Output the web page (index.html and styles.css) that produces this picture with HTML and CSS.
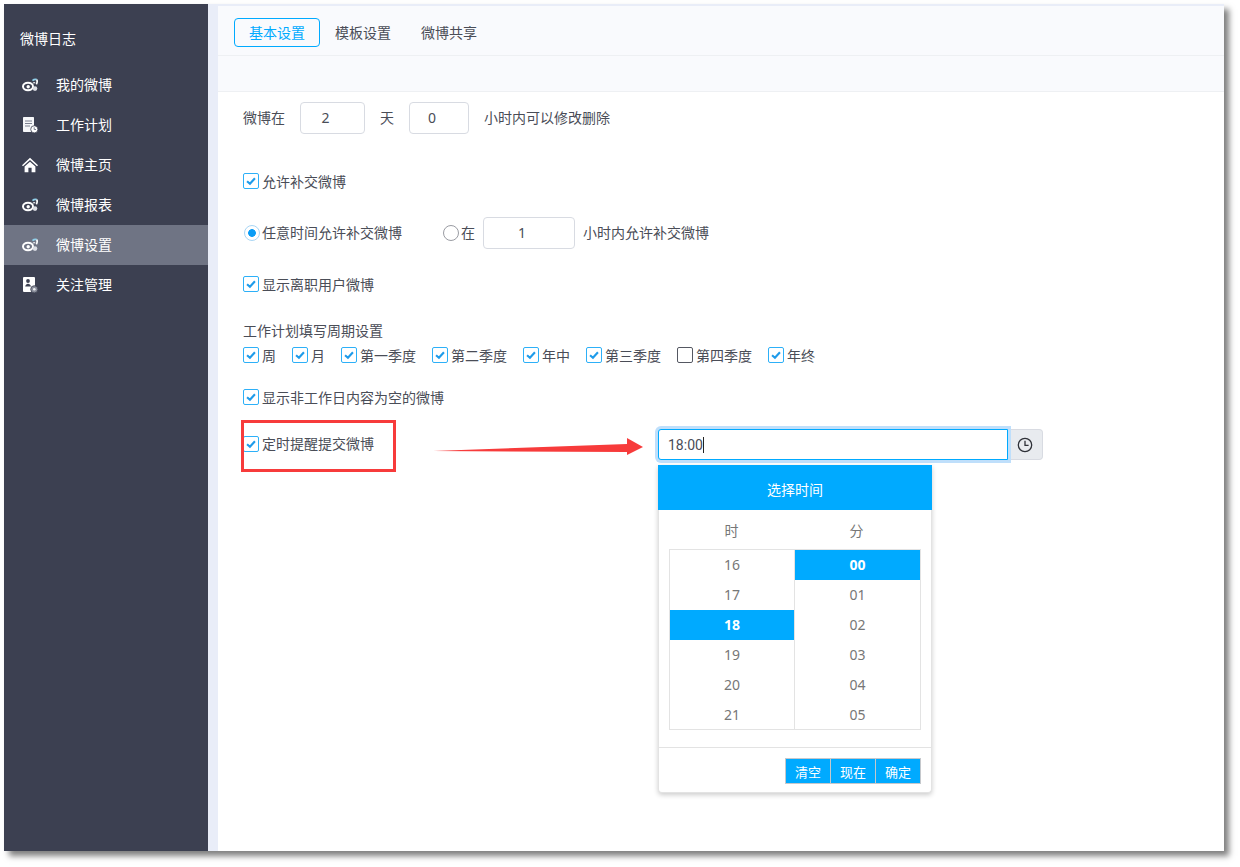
FILE: index.html
```html
<!DOCTYPE html>
<html lang="zh-CN">
<head>
<meta charset="utf-8">
<title>微博设置</title>
<link rel="stylesheet" href="styles.css">
</head>
<body>
<svg class="defs" width="0" height="0" aria-hidden="true">
  <symbol id="i-weibo" viewBox="0 0 16 16">
    <ellipse cx="6" cy="9.500" rx="5" ry="3.700" fill="none" stroke="#fff" stroke-width="2"/>
    <circle cx="6.200" cy="9.700" r="1.700" fill="#fff"/>
    <path d="M10.500 3.600C11.700 2.500 13.200 2.200 14.800 2.600" fill="none" stroke="#8fd0ea" stroke-width="1.700"/>
    <path d="M14.800 2.600C15.400 4.200 15.200 5.800 14.300 7.200" fill="none" stroke="#fff" stroke-width="1.700"/>
    <path d="M11 6C11.800 5.500 12.500 5.500 13.100 5.800" fill="none" stroke="#e6e8ee" stroke-width="1.300"/>
    <circle cx="13" cy="11.600" r="2.300" fill="#dcdee5"/>
  </symbol>
  <symbol id="i-plan" viewBox="0 0 16 16">
    <path d="M1 1C1 .4 1.500 0 2 0h9c.6 0 1 .4 1 1v14H2c-.5 0-1-.4-1-1z" fill="#f6f7f9"/>
    <path d="M3 4h7M3 6.500h7M3 9h5" stroke="#7c8190" stroke-width="1"/>
    <circle cx="12.300" cy="12.300" r="3.600" fill="#fff" stroke="#3c4051" stroke-width=".8"/>
    <path d="M12.200 10.300v2.200h1.800" fill="none" stroke="#7c8190"/>
  </symbol>
  <symbol id="i-home" viewBox="0 0 16 16">
    <path d="M8 .8 0 8.200l1 1L8 3l7 6.200 1-1z" fill="#fff"/>
    <path d="M2.600 9.600 8 4.800l5.400 4.800v5.600H9.600v-4.400H6.400v4.400H2.600z" fill="#fff"/>
  </symbol>
  <symbol id="i-follow" viewBox="0 0 16 16">
    <rect x="1" y="0" width="12" height="15" rx="1" fill="#fff"/>
    <circle cx="6" cy="4" r="1.900" fill="#3c4051"/>
    <path d="M3.200 9.500c.4-2 1.500-2.800 2.800-2.800s2.500.8 3 2.800z" fill="#3c4051"/>
    <circle cx="12.300" cy="12.300" r="3.600" fill="#8a8e9b" stroke="#3c4051" stroke-width=".8"/>
    <circle cx="12.300" cy="12.300" r="1.300" fill="#eceef2"/>
  </symbol>
</svg>

<div class="window">
  <aside class="sidebar">
    <div class="side-title">微博日志</div>
    <nav class="side-nav">
      <a class="side-item"><svg class="side-icon"><use href="#i-weibo"/></svg>我的微博</a>
      <a class="side-item"><svg class="side-icon"><use href="#i-plan"/></svg>工作计划</a>
      <a class="side-item"><svg class="side-icon"><use href="#i-home"/></svg>微博主页</a>
      <a class="side-item"><svg class="side-icon"><use href="#i-weibo"/></svg>微博报表</a>
      <a class="side-item active"><svg class="side-icon"><use href="#i-weibo"/></svg>微博设置</a>
      <a class="side-item"><svg class="side-icon"><use href="#i-follow"/></svg>关注管理</a>
    </nav>
  </aside>

  <main class="panel">
    <div class="tabs">
      <a class="tab current">基本设置</a>
      <a class="tab">模板设置</a>
      <a class="tab">微博共享</a>
    </div>
    <div class="subbar"></div>

    <form class="form">
      <div class="row row-limit">
        <span>微博在</span>
        <span class="num n-day">2</span>
        <span>天</span>
        <span class="num n-hour">0</span>
        <span>小时内可以修改删除</span>
      </div>

      <div class="row row-allow">
        <label class="opt"><span class="check"><svg viewBox="0 0 16 16"><path d="M3.500 8.200 6.800 11.200 12.500 4.800"/></svg></span>允许补交微博</label>
      </div>

      <div class="row row-mode">
        <label class="opt"><span class="radio on"></span>任意时间允许补交微博</label>
        <label class="opt opt-in"><span class="radio"></span>在</label>
        <span class="num n-within">1</span>
        <span>小时内允许补交微博</span>
      </div>

      <div class="row row-left">
        <label class="opt"><span class="check"><svg viewBox="0 0 16 16"><path d="M3.500 8.200 6.800 11.200 12.500 4.800"/></svg></span>显示离职用户微博</label>
      </div>

      <div class="row row-cycle-title">工作计划填写周期设置</div>

      <div class="row row-cycle">
        <label class="opt"><span class="check"><svg viewBox="0 0 16 16"><path d="M3.500 8.200 6.800 11.200 12.500 4.800"/></svg></span>周</label>
        <label class="opt"><span class="check"><svg viewBox="0 0 16 16"><path d="M3.500 8.200 6.800 11.200 12.500 4.800"/></svg></span>月</label>
        <label class="opt"><span class="check"><svg viewBox="0 0 16 16"><path d="M3.500 8.200 6.800 11.200 12.500 4.800"/></svg></span>第一季度</label>
        <label class="opt"><span class="check"><svg viewBox="0 0 16 16"><path d="M3.500 8.200 6.800 11.200 12.500 4.800"/></svg></span>第二季度</label>
        <label class="opt"><span class="check"><svg viewBox="0 0 16 16"><path d="M3.500 8.200 6.800 11.200 12.500 4.800"/></svg></span>年中</label>
        <label class="opt"><span class="check"><svg viewBox="0 0 16 16"><path d="M3.500 8.200 6.800 11.200 12.500 4.800"/></svg></span>第三季度</label>
        <label class="opt"><span class="check off"></span>第四季度</label>
        <label class="opt"><span class="check"><svg viewBox="0 0 16 16"><path d="M3.500 8.200 6.800 11.200 12.500 4.800"/></svg></span>年终</label>
      </div>

      <div class="row row-empty">
        <label class="opt"><span class="check"><svg viewBox="0 0 16 16"><path d="M3.500 8.200 6.800 11.200 12.500 4.800"/></svg></span>显示非工作日内容为空的微博</label>
      </div>

      <div class="row row-remind">
        <label class="opt opt-remind"><span class="check"><svg viewBox="0 0 16 16"><path d="M3.500 8.200 6.800 11.200 12.500 4.800"/></svg></span>定时提醒提交微博</label>
        <div class="time-field">
          <div class="time-input">18:00<span class="caret"></span></div>
          <div class="time-addon">
            <svg viewBox="0 0 16 16"><circle cx="8" cy="8" r="6.700"/><path d="M8 3.800V8.400H11.600"/></svg>
          </div>

          <div class="picker">
            <div class="picker-head">选择时间</div>
            <div class="picker-labels"><span>时</span><span>分</span></div>
            <div class="picker-cols">
              <ul class="col">
                <li>16</li><li>17</li><li class="sel">18</li><li>19</li><li>20</li><li>21</li>
              </ul>
              <ul class="col">
                <li class="sel">00</li><li>01</li><li>02</li><li>03</li><li>04</li><li>05</li>
              </ul>
            </div>
            <div class="picker-foot">
              <span class="pbtn">清空</span><span class="pbtn">现在</span><span class="pbtn">确定</span>
            </div>
          </div>
        </div>
      </div>

      <div class="mark-box"></div>
      <svg class="mark-arrow" viewBox="0 0 212 20"><polygon points="0,13 194,6 194,0 210,9 194,17 194,14"/></svg>
    </form>
  </main>
</div>
</body>
</html>
```

FILE: styles.css
```css
* { box-sizing: border-box; }
html, body { margin: 0; height: 100%; }
body {
  padding: 4px;
  background: #fff;
  overflow: hidden;
  font-family: "Noto Sans", "Noto Sans CJK SC", sans-serif;
  font-size: 14px;
  color: #4a4d57;
}
.defs { position: absolute; }

.window {
  display: flex;
  width: 1220px;
  height: 847px;
  background: #e9edf8;
  box-shadow: 5px 5px 6px rgba(0, 0, 0, .5);
}

.sidebar {
  flex: 0 0 204px;
  background: #3c4051;
  color: #fff;
}
.side-title {
  height: 61px;
  padding: 24px 0 0 16px;
  line-height: 22px;
}
.side-item {
  display: flex;
  align-items: center;
  height: 40px;
  padding: 0 0 2px 18px;
  color: #fff;
}
.side-item.active { background: #6f7484; }
.side-icon {
  width: 16px;
  height: 16px;
  margin: 2px 18px 0 0;
  flex: none;
}

.panel {
  display: flex;
  flex-direction: column;
  flex: 1;
  margin: 2px 0 0 10px;
  background: #fff;
  min-width: 0;
}
.tabs {
  display: flex;
  height: 50px;
  padding: 12px 0 0 16px;
  background: #f9fafd;
  border-bottom: 1px solid #eef0f3;
}
.tab {
  width: 86px;
  height: 29px;
  line-height: 27px;
  text-align: center;
  border: 1px solid transparent;
  border-radius: 4px;
  color: #4a4d57;
}
.tab.current {
  border-color: #00aaff;
  color: #00aaff;
}
.subbar {
  height: 36px;
  background: #f9fafd;
  border-bottom: 1px solid #eef0f3;
}

.form {
  position: relative;
  flex: 1;
  padding: 10px 0 0 25px;
}
.row {
  display: flex;
  align-items: center;
  height: 20px;
  line-height: 20px;
}
.opt {
  display: flex;
  align-items: center;
}
.check {
  flex: none;
  width: 16px;
  height: 16px;
  margin-right: 3px;
  border: 1px solid #2db0f8;
  border-radius: 2px;
  background: #fff;
  position: relative;
  top: -1px;
}
.check svg {
  display: block;
  width: 14px;
  height: 14px;
  fill: none;
  stroke: #1e9bea;
  stroke-width: 2.400;
}
.check.off { border-color: #555862; }
.radio {
  flex: none;
  width: 16px;
  height: 16px;
  margin-right: 2px;
  border: 1px solid #9a9ca3;
  border-radius: 50%;
  background: #fff;
}
.radio.on {
  margin-left: 1px;
  margin-right: 2px;
  border-color: #a9d6f5;
  background: radial-gradient(circle, #0a9cf5 0 3.500px, #fff 4.200px);
}
.num {
  display: block;
  height: 32px;
  line-height: 30px;
  padding-right: 14px;
  text-align: center;
  border: 1px solid #d8dbe2;
  border-radius: 4px;
  background: #fff;
  font-size: 14px;
}
.row-limit { height: 32px; gap: 15px; }
.row-limit .n-day { width: 65px; }
.row-limit .n-hour { width: 60px; }
.row-allow { margin-top: 38px; }
.row-mode { height: 32px; margin-top: 25px; }
.opt-in { margin-left: 41px; }
.n-within { width: 92px; margin: 0 8px; }
.row-left { margin-top: 26px; }
.row-cycle-title { margin-top: 26px; }
.row-cycle { margin-top: 5px; gap: 16px; }
.row-empty { margin-top: 22px; }
.row-remind {
  height: 31px;
  margin-top: 21px;
}
.opt-remind {
  width: 415px;
  padding-bottom: 2px;
}
.opt-remind .check { top: 0; }

.time-field {
  position: relative;
  display: flex;
  width: 385px;
  height: 31px;
}
.time-input {
  width: 350px;
  height: 31px;
  padding-left: 9px;
  line-height: 31px;
  font-family: Roboto, sans-serif;
  border: 1px solid #00aaff;
  border-radius: 3px 0 0 3px;
  background: #fff;
  box-shadow: 0 0 0 3px #bfdffb;
  position: relative;
  z-index: 1;
}
.caret {
  display: inline-block;
  width: 1px;
  height: 16px;
  background: #222;
  vertical-align: -3px;
}
.time-addon {
  display: flex;
  align-items: center;
  justify-content: center;
  width: 35px;
  background: #e8ebef;
  border: 1px solid #d8dbe2;
  border-left: 0;
  border-radius: 0 4px 4px 0;
}
.time-addon svg {
  width: 16px;
  height: 16px;
  fill: none;
  stroke: #2e3138;
  stroke-width: 1.300;
}

.picker {
  position: absolute;
  left: 0;
  top: 36px;
  z-index: 2;
  width: 274px;
  height: 328px;
  background: #fff;
  border: 1px solid #e3e3e3;
  border-top: 0;
  border-radius: 0 0 4px 4px;
  box-shadow: 0 2px 5px rgba(0, 0, 0, .2);
  color: #777;
}
.picker-head {
  height: 45px;
  margin: 0 -1px;
  line-height: 50px;
  text-align: center;
  background: #00aaff;
  color: #fff;
}
.picker-labels {
  display: flex;
  height: 39px;
  padding: 0 10px;
  line-height: 42px;
}
.picker-labels span {
  flex: 0 0 125px;
  text-align: center;
}
.picker-cols {
  display: flex;
  width: 252px;
  height: 181px;
  margin-left: 10px;
  border: 1px solid #e3e3e3;
}
.col {
  flex: 1;
  margin: 0;
  padding: 0;
  list-style: none;
  text-align: center;
}
.col:first-child {
  flex: 0 0 125px;
  border-right: 1px solid #e3e3e3;
}
.col li {
  height: 30px;
  line-height: 30px;
}
.col li.sel {
  background: #00aaff;
  color: #fff;
  font-weight: 700;
}
.picker-foot {
  display: flex;
  justify-content: flex-end;
  height: 46px;
  margin-top: 17px;
  padding: 10px 10px 0 0;
  border-top: 1px solid #e3e3e3;
}
.pbtn {
  width: 45px;
  height: 26px;
  line-height: 26px;
  font-size: 13px;
  text-align: center;
  color: #fff;
  background: #00aaff;
  border: 1px solid #c5c8cc;
  border-left-width: 0;
}
.pbtn:first-child { width: 46px; border-left-width: 1px; }

.mark-box {
  position: absolute;
  left: 23px;
  top: 328px;
  width: 155px;
  height: 52px;
  border: 3px solid #f73b3b;
}
.mark-arrow {
  position: absolute;
  left: 215px;
  top: 346px;
  width: 212px;
  height: 20px;
  fill: #f73b3b;
}
```
